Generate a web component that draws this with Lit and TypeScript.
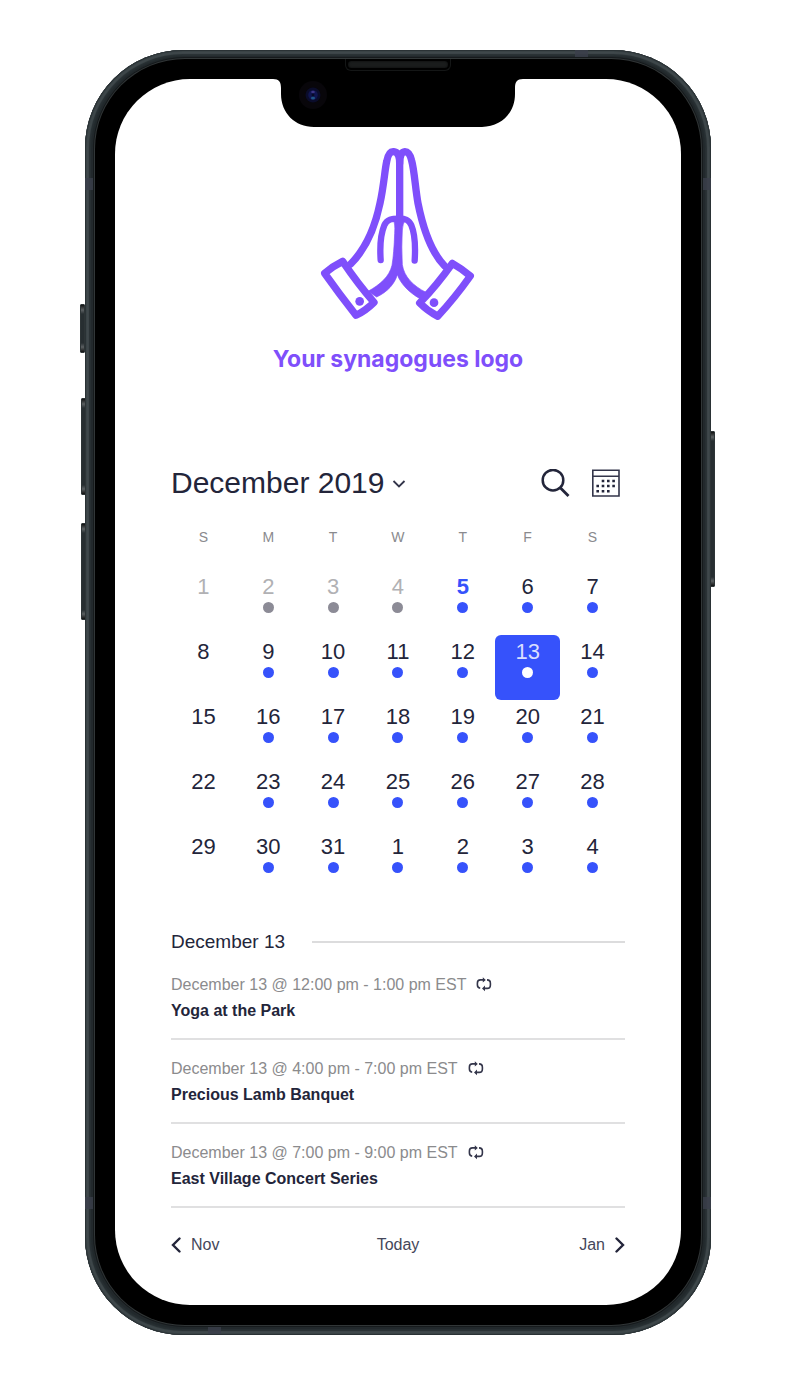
import { LitElement, html, css, svg, nothing } from "lit";
import { customElement, state } from "lit/decorators.js";
import { classMap } from "lit/directives/class-map.js";

interface Day {
  n: number;
  past?: boolean;
  today?: boolean;
  events: boolean;
}

const WEEKDAYS: [string, string][] = [
  ["S", "Sunday"],
  ["M", "Monday"],
  ["T", "Tuesday"],
  ["W", "Wednesday"],
  ["T", "Thursday"],
  ["F", "Friday"],
  ["S", "Saturday"],
];

const EVENTS = [
  { time: "December 13 @ 12:00 pm - 1:00 pm EST", title: "Yoga at the Park" },
  { time: "December 13 @ 4:00 pm - 7:00 pm EST", title: "Precious Lamb Banquet" },
  { time: "December 13 @ 7:00 pm - 9:00 pm EST", title: "East Village Concert Series" },
];

@customElement("phone-frame")
export class PhoneFrame extends LitElement {
  static styles = css`
    :host {
      display: block;
    }
    .frame {
      position: relative;
      padding: 9px 10px 10px;
      border-radius: 98px;
      background: #22292c;
      box-shadow:
        inset 0 0 0 1px #2a3235,
        inset 0 0 0 2px #3a4346,
        inset 0 0 1px 4px #3f484b,
        inset 0 0 1px 6px #283033;
    }
    .bezel {
      position: relative;
      padding: 20px;
      border-radius: 90px;
      background: #000;
      box-shadow: 0 0 0 1px #313637, 0 0 0 2px #161a1c;
    }
    .screen {
      border-radius: 75px;
      background: #fff;
    }
    .notch {
      position: absolute;
      top: 20px;
      left: 50%;
      width: 250px;
      height: 48px;
      margin-left: -125px;
    }
    .speaker {
      position: absolute;
      top: 0;
      left: 50%;
      width: 106px;
      height: 12px;
      margin-left: -53px;
      box-sizing: border-box;
      border: 1px solid #141616;
      border-top: 0;
      border-radius: 0 0 6px 6px;
    }
    .grille {
      height: 7px;
      margin: 2px;
      border-radius: 4px;
      background: #1a1c1c;
      box-shadow: inset 0 0 2px #060707;
    }
    .camera {
      position: absolute;
      top: 22px;
      left: 50%;
      width: 28px;
      height: 28px;
      margin-left: -99px;
    }
    .key {
      position: absolute;
      box-sizing: border-box;
      width: 5px;
      background: linear-gradient(#111 0, #5b6062 5px, #272e31 9px, #272e31 calc(100% - 9px), #5b6062 calc(100% - 5px), #111 100%);
      border: 1px solid #2d3436;
      border-radius: 1px;
    }
    .mute { left: -5px; top: 254px; height: 49px; }
    .up { left: -4px; top: 348px; height: 97px; }
    .down { left: -4px; top: 473px; height: 97px; }
    .power { right: -4px; top: 381px; height: 156px; }
    .band {
      position: absolute;
      background: #3b3f4b;
      opacity: 0.8;
    }
    .side { width: 8px; height: 12px; }
    .flat { width: 13px; height: 7px; }
    .lt { left: 0; top: 128px; }
    .rt { right: 0; top: 128px; }
    .lb { left: 0; bottom: 126px; }
    .rb { right: 0; bottom: 126px; }
    .tr { right: 123px; top: 0; }
    .bl { left: 123px; bottom: 1px; }
  `;

  render() {
    return html`
      <div class="frame">
        <span class="key mute"></span>
        <span class="key up"></span>
        <span class="key down"></span>
        <span class="key power"></span>
        <span class="band side lt"></span>
        <span class="band side rt"></span>
        <span class="band side lb"></span>
        <span class="band side rb"></span>
        <span class="band flat tr"></span>
        <span class="band flat bl"></span>
        <div class="bezel">
          <div class="screen"><slot></slot></div>
          <svg class="notch" viewBox="0 0 250 48" aria-hidden="true">
            <path d="M0 0 C6 0 8 3 8 9 V15 C8 34 22 48 41 48 H209 C228 48 242 34 242 15 V9 C242 3 244 0 250 0 Z" fill="#000" />
          </svg>
          <div class="speaker"><div class="grille"></div></div>
          <svg class="camera" viewBox="0 0 28 28" aria-hidden="true">
            <circle cx="14" cy="14" r="14" fill="#08060a" />
            <circle cx="14" cy="14" r="7.5" fill="#0a0c2a" />
            <circle cx="14" cy="14" r="4.8" fill="#101550" />
            <ellipse cx="14" cy="11" rx="1.8" ry="1.2" fill="#3c3585" />
            <ellipse cx="14" cy="17" rx="2" ry="1.5" fill="#1f5688" />
            <circle cx="14" cy="14" r="1.4" fill="#070a26" />
          </svg>
        </div>
      </div>
    `;
  }
}

@customElement("brand-logo")
export class BrandLogo extends LitElement {
  static styles = css`
    :host {
      display: flex;
      flex-direction: column;
      align-items: center;
      gap: 20px;
      color: #7f4ffb;
    }
    .hands {
      width: 160px;
      height: 178px;
    }
    .name {
      margin: 0;
      font: 700 23px/32px Inter, sans-serif;
    }
  `;

  render() {
    return html`
      <svg class="hands" viewBox="54 45 480 534" fill="none" stroke="currentColor" stroke-width="22" stroke-linecap="round" stroke-linejoin="round" aria-hidden="true">
        <path d="M152 402 C204 350 228 278 240 220 C252 165 254 122 260 95 C264 73 271 64 281 65 C292 66 299 78 299 100 V270" />
        <path d="M434 408 C395 368 370 300 354 220 C346 175 343 120 335 92 C330 72 323 65 315 65 C304 66 299 80 299 100" />
        <path stroke-width="19" d="M242 390 C239 345 245 305 253 286 C261 267 275 266 298 266 C315 266 326 268 334 286 C342 305 347 345 344 392" />
        <path stroke-width="2" fill="currentColor" d="M280 270 Q286 280 284 310 Q282 370 276 406 C268 440 240 464 204 484 L230 501 C262 486 284 462 292 434 C302 462 328 488 360 506 L378 487 C340 468 312 440 307 404 Q304 350 307 300 Q308 280 316 270 Z" />
        <path d="M74 430 Q99 408 128 394 Q174 462 222 517 Q198 541 168 556 Q118 492 74 430 Z" />
        <path d="M457 400 Q487 417 511 438 Q465 503 413 559 Q383 543 359 519 Q412 464 457 400 Z" />
        <circle cx="179" cy="514" r="13" fill="currentColor" stroke="none" />
        <circle cx="402" cy="518" r="13" fill="currentColor" stroke="none" />
      </svg>
      <p class="name">Your synagogues logo</p>
    `;
  }
}

@customElement("event-calendar")
export class EventCalendar extends LitElement {
  static styles = css`
    :host {
      display: block;
      color: #23253a;
      font-family: "Liberation Sans", Arial, sans-serif;
    }
    button,
    a {
      padding: 0;
      border: 0;
      background: none;
      color: inherit;
      font: inherit;
      text-decoration: none;
      cursor: pointer;
    }
    .head {
      display: flex;
      align-items: center;
      height: 40px;
      padding-right: 5px;
    }
    .title {
      flex: 1;
      margin: 0;
      font-size: 30px;
      font-weight: 400;
      line-height: 40px;
    }
    .month {
      display: flex;
      align-items: center;
      gap: 8px;
    }
    .tools {
      display: flex;
      gap: 22px;
    }
    .icon {
      display: block;
    }
    .grid {
      width: 100%;
      border-collapse: collapse;
      table-layout: fixed;
    }
    th {
      height: 67px;
      padding: 0;
      color: #8a8a8e;
      font-size: 14px;
      font-weight: 400;
    }
    td {
      padding: 0;
    }
    .day {
      display: flex;
      flex-direction: column;
      align-items: center;
      gap: 3px;
      box-sizing: border-box;
      width: 100%;
      height: 65px;
      padding-top: 5px;
      border-radius: 6px;
      font-size: 22px;
      line-height: 24px;
    }
    .dot {
      width: 11px;
      height: 11px;
      border-radius: 50%;
      background: #3652fb;
    }
    .past {
      color: #b1b1b4;
    }
    .past .dot {
      background: #8c8b96;
    }
    .today {
      color: #3652fb;
      font-weight: 700;
    }
    .selected {
      background: #3652fb;
      color: #d9deff;
    }
    .selected .dot {
      background: #fff;
    }
    .date {
      display: flex;
      align-items: center;
      gap: 27px;
      margin: 33px 0 0;
      font-size: 19px;
      font-weight: 400;
      line-height: 28px;
    }
    .date::after {
      content: "";
      flex: 1;
      height: 2px;
      background: #dcdcdd;
    }
    .events {
      margin: 0;
      padding: 0;
      list-style: none;
    }
    .event {
      padding: 16px 0 14px;
      border-bottom: 2px solid #e0e0e1;
      font-size: 16px;
      line-height: 26px;
    }
    .time {
      display: flex;
      align-items: center;
      gap: 10px;
      color: #8b8b8d;
    }
    .name {
      margin: 0;
      font-size: 16px;
      font-weight: 700;
    }
    .pager {
      display: grid;
      grid-template-columns: 1fr auto 1fr;
      align-items: center;
      margin-top: 22px;
      color: #45475a;
      font-size: 16px;
      line-height: 30px;
    }
    .step {
      display: flex;
      align-items: center;
      gap: 9px;
    }
    .next {
      justify-self: end;
    }
  `;

  @state() private picked = 12;

  private days: Day[] = Array.from({ length: 35 }, (_, i) => ({
    n: i < 31 ? i + 1 : i - 30,
    past: i < 4,
    today: i === 4,
    events: i % 7 !== 0,
  }));

  private chevron(points: string) {
    return html`<svg class="icon" width="11" height="16" viewBox="0 0 11 16" fill="none" stroke="#23253a" stroke-width="2.4" stroke-linecap="round" aria-hidden="true">${svg`<polyline points=${points} />`}</svg>`;
  }

  private day(d: Day, i: number) {
    const cls = { day: true, past: !!d.past, today: !!d.today, selected: i === this.picked };
    return html`<td>
      <button class=${classMap(cls)} @click=${() => (this.picked = i)}>
        <span>${d.n}</span>
        ${d.events ? html`<span class="dot"></span>` : nothing}
      </button>
    </td>`;
  }

  render() {
    const weeks = [0, 1, 2, 3, 4].map((w) => this.days.slice(w * 7, w * 7 + 7));
    return html`
      <header class="head">
        <h1 class="title">
          <button class="month">
            December 2019
            <svg class="icon" width="14" height="10" viewBox="0 0 14 10" fill="none" stroke="#33354a" stroke-width="1.8" aria-hidden="true">
              <polyline points="1.5,3 7,8.5 12.5,3" />
            </svg>
          </button>
        </h1>
        <div class="tools">
          <button aria-label="Search">
            <svg class="icon" width="29" height="29" viewBox="0 0 29 29" fill="none" stroke="#23253a" stroke-width="2.5">
              <circle cx="12" cy="11.2" r="10.3" />
              <path d="M19 18.5 L27.5 27" stroke-width="2.8" />
            </svg>
          </button>
          <button aria-label="Month view">
            <svg class="icon" width="28" height="29" viewBox="0 0 28 29">
              <path d="M0.8 1.2 H27 V27 H0.8 Z M0.8 7.2 H27" fill="none" stroke="#33354a" stroke-width="1.6" />
              <path d="M9.7 12 H25 M4.4 17 H25 M4.4 22.2 H19" fill="none" stroke="#23253a" stroke-width="2.6" stroke-dasharray="2.6 2.7" />
            </svg>
          </button>
        </div>
      </header>
      <table class="grid" aria-label="December 2019">
        <thead>
          <tr>${WEEKDAYS.map(([s, name]) => html`<th scope="col" abbr=${name}>${s}</th>`)}</tr>
        </thead>
        <tbody>
          ${weeks.map((week, w) => html`<tr>${week.map((d, i) => this.day(d, w * 7 + i))}</tr>`)}
        </tbody>
      </table>
      <h2 class="date">December 13</h2>
      <ul class="events">
        ${EVENTS.map(
          (e) => html`<li class="event">
            <div class="time">
              ${e.time}
              <svg class="icon" width="16" height="16" viewBox="0 0 16 16" fill="none" stroke="#33354a" stroke-width="1.6" aria-hidden="true">
                <path d="M4.2 11.2 C2.2 10.8 1.4 9.6 1.4 8 V6 C1.4 3.9 2.5 2.9 4.5 2.9 H7.5" />
                <path d="M11 2.9 C13.4 3 14.4 4.2 14.4 6.2 V8 C14.4 10.2 13.2 11.4 11.2 11.4 H8.5" />
                <path d="M6.8 0.2 L9.8 2.9 L6.8 5.6 Z M9 8.6 L6 11.4 L9 14.2 Z" fill="#33354a" stroke="none" />
              </svg>
            </div>
            <h3 class="name"><a href="#event">${e.title}</a></h3>
          </li>`,
        )}
      </ul>
      <nav class="pager" aria-label="Month">
        <a class="step" href="#nov">${this.chevron("8.5,1.5 2,8 8.5,14.5")}Nov</a>
        <a href="#today">Today</a>
        <a class="step next" href="#jan">Jan${this.chevron("2.5,1.5 9,8 2.5,14.5")}</a>
      </nav>
    `;
  }
}

@customElement("app-root")
export class AppRoot extends LitElement {
  static styles = css`
    :host {
      display: block;
      min-height: 100vh;
      box-sizing: border-box;
      padding: 50px 75px 51px 85px;
      background: #fff;
    }
    .page {
      display: flex;
      flex-direction: column;
      gap: 88px;
      padding: 66px 56px 45px;
    }
  `;

  render() {
    return html`
      <phone-frame>
        <main class="page">
          <brand-logo></brand-logo>
          <event-calendar></event-calendar>
        </main>
      </phone-frame>
    `;
  }
}
